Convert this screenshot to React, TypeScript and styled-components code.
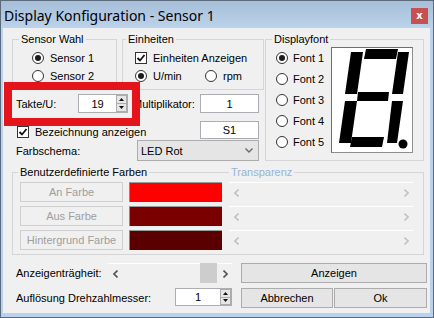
import React from "react";
import styled, { createGlobalStyle } from "styled-components";

const GlobalStyle = createGlobalStyle`
  html, body { margin: 0; padding: 0; background: #ffffff; }
  body {
    font-family: "Liberation Sans", Arial, sans-serif;
    font-size: 11px;
    color: #000;
  }
`;

const Window = styled.div`
  width: 434px;
  height: 318px;
  box-sizing: border-box;
  border: 1px solid #5c6b7c;
  background: linear-gradient(#a7bed8, #bcd3ec 28px, #b9d1eb);
  display: flex;
  flex-direction: column;
`;

const TitleBar = styled.div`
  height: 27px;
  flex: none;
  display: flex;
  align-items: center;
  justify-content: space-between;
  padding: 0 5px 0 3px;
`;

const TitleText = styled.span`
  font-family: "Noto Sans", "Open Sans", sans-serif;
  font-size: 14px;
  color: #000;
  margin-top: 1px;
`;

const CloseBox = styled.div`
  width: 17px;
  height: 16px;
  background: #c75050;
  color: #fff;
  font-family: "DejaVu Sans", sans-serif;
  font-weight: bold;
  font-size: 10px;
  display: flex;
  align-items: center;
  justify-content: center;
  margin-top: 2px;
`;

const Client = styled.div`
  flex: 1;
  margin: 0 3px 4px 2px;
  background: #f0f0f0;
  position: relative;
  box-sizing: border-box;
  padding: 11px 0 0 9px;
  display: flex;
  flex-direction: column;
`;

const TopSection = styled.div`
  display: flex;
  gap: 1px;
  align-items: flex-start;
`;

const LeftCol = styled.div`
  width: 252px;
  display: flex;
  flex-direction: column;
`;

const GroupRow = styled.div`
  display: flex;
  gap: 5px;
`;

const Group = styled.div<{ $w: number; $h: number; $pad?: string }>`
  position: relative;
  box-sizing: border-box;
  width: ${(p) => p.$w}px;
  height: ${(p) => p.$h}px;
  border: 1px solid #d5d5d5;
  padding: ${(p) => p.$pad || "0"};
`;

const Legend = styled.span<{ $x?: number; $blue?: boolean }>`
  position: absolute;
  top: -7px;
  left: ${(p) => p.$x ?? 5}px;
  padding: 0 2px;
  line-height: 13px;
  background: #f0f0f0;
  color: ${(p) => (p.$blue ? "#97b4d6" : "#000")};
  white-space: nowrap;
`;

const OptionRow = styled.div<{ $h?: number }>`
  display: flex;
  align-items: center;
  height: ${(p) => p.$h ?? 18}px;
`;

const Option = styled.label<{ $w?: number; $gap?: number; $shift?: number }>`
  display: flex;
  align-items: center;
  gap: ${(p) => p.$gap ?? 6}px;
  width: ${(p) => (p.$w ? `${p.$w}px` : "auto")};
  margin-top: ${(p) => p.$shift ?? 0}px;
  white-space: nowrap;
`;

const RadioDot = styled.span<{ $on?: boolean }>`
  width: 12px;
  height: 12px;
  box-sizing: border-box;
  border-radius: 50%;
  border: 1px solid #333;
  background: #fff;
  flex: none;
  display: flex;
  align-items: center;
  justify-content: center;
  &::after {
    content: "";
    width: 6px;
    height: 6px;
    border-radius: 50%;
    background: ${(p) => (p.$on ? "#1b1b1b" : "transparent")};
  }
`;

const CheckBox = styled.span`
  width: 12px;
  height: 12px;
  box-sizing: border-box;
  border: 1px solid #333;
  background: #fff;
  flex: none;
  display: flex;
  align-items: center;
  justify-content: center;
`;

const FormRow = styled.div<{ $h: number; $top: number }>`
  display: flex;
  align-items: center;
  height: ${(p) => p.$h}px;
  margin-top: ${(p) => p.$top}px;
  width: 247px;
  padding-left: 4px;
  box-sizing: border-box;
`;

const Label = styled.span<{ $w?: number; $ml?: number }>`
  width: ${(p) => (p.$w ? `${p.$w}px` : "auto")};
  margin-left: ${(p) => p.$ml ?? 0}px;
  white-space: nowrap;
  flex: none;
`;

const TextField = styled.div<{ $w: number; $h?: number }>`
  width: ${(p) => p.$w}px;
  height: ${(p) => p.$h ?? 19}px;
  box-sizing: border-box;
  border: 1px solid #abadb3;
  background: #fff;
  display: flex;
  align-items: center;
  justify-content: center;
  margin-left: auto;
  flex: none;
`;

const Spin = styled.div<{ $w: number; $h?: number }>`
  width: ${(p) => p.$w}px;
  height: ${(p) => p.$h ?? 19}px;
  box-sizing: border-box;
  border: 1px solid #abadb3;
  background: #fff;
  display: flex;
  flex: none;
`;

const SpinValue = styled.span`
  flex: 1;
  display: flex;
  align-items: center;
  justify-content: center;
`;

const SpinButtons = styled.div`
  width: 11px;
  display: flex;
  flex-direction: column;
`;

const SpinBtn = styled.div`
  flex: 1;
  background: #e6e6e6;
  border: 1px solid #acacac;
  margin-top: -1px;
  display: flex;
  align-items: center;
  justify-content: center;
  &:first-child {
    margin-top: 0;
  }
`;

const Combo = styled.div`
  width: 122px;
  height: 21px;
  box-sizing: border-box;
  border: 1px solid #acacac;
  background: #e5e5e5;
  margin-left: auto;
  display: flex;
  align-items: center;
  justify-content: space-between;
  padding: 0 5px 0 3px;
  color: #000;
`;

const FontPane = styled.div`
  display: flex;
  padding: 7px 0 0 10px;
`;

const FontList = styled.div`
  width: 55px;
  display: flex;
  flex-direction: column;
`;

const Preview = styled.div`
  width: 82px;
  height: 106px;
  box-sizing: border-box;
  background: #fff;
  border: 1px solid #8e8e8e;
  border-top-color: #6f6f6f;
  border-left-color: #6f6f6f;
`;

const ColorGroupBody = styled.div`
  display: flex;
  flex-direction: column;
  gap: 4px;
  padding: 9px 0 0 7px;
`;

const ColorRow = styled.div`
  display: flex;
  align-items: stretch;
  height: 20px;
`;

const Button = styled.div<{ $w: number; $off?: boolean; $ml?: number }>`
  width: ${(p) => p.$w}px;
  margin-left: ${(p) => p.$ml ?? 0}px;
  height: 20px;
  box-sizing: border-box;
  flex: none;
  border: 1px solid ${(p) => (p.$off ? "#cfcfcf" : "#acacac")};
  background: ${(p) => (p.$off ? "#f0f0f0" : "#e5e5e5")};
  color: ${(p) => (p.$off ? "#9e9e9e" : "#000")};
  display: flex;
  align-items: center;
  justify-content: center;
`;

const Swatch = styled.div<{ $color: string }>`
  width: 93px;
  margin-left: 6px;
  box-sizing: border-box;
  background: ${(p) => p.$color};
  border-left: 1px solid #8a8a8a;
  border-top: 1px solid #9a9a9a;
`;

const ScrollBar = styled.div<{ $w: number; $ml?: number }>`
  width: ${(p) => p.$w}px;
  margin-left: ${(p) => p.$ml ?? 0}px;
  height: 20px;
  box-sizing: border-box;
  border-top: 1px solid #ffffff;
  background: #f0f0f0;
  display: flex;
  align-items: center;
  justify-content: space-between;
  padding: 0 4px 0 5px;
  flex: none;
`;

const Thumb = styled.div`
  width: 17px;
  align-self: stretch;
  margin: -1px 6px 0 auto;
  background: #cdcdcd;
`;

const BottomRow = styled.div<{ $top: number }>`
  display: flex;
  align-items: center;
  height: 20px;
  margin-top: ${(p) => p.$top}px;
`;

const BottomLabel = styled.span<{ $w: number }>`
  width: ${(p) => p.$w}px;
  padding-left: 4px;
  box-sizing: border-box;
  flex: none;
  white-space: nowrap;
`;

const SpinSlot = styled.div`
  align-self: flex-start;
`;

const Marker = styled.div`
  position: absolute;
  left: 1px;
  top: 54px;
  width: 136px;
  height: 44px;
  box-sizing: border-box;
  border: 8px solid #e5141c;
  pointer-events: none;
`;

const Chevron = ({ dir, color }: { dir: "l" | "r" | "d"; color: string }) => {
  if (dir === "d") {
    return (
      <svg width="8" height="5" viewBox="0 0 8 5">
        <polyline points="0.5,0.5 4,4 7.5,0.5" fill="none" stroke={color} strokeWidth="1.4" />
      </svg>
    );
  }
  const pts = dir === "l" ? "4.5,0.5 1,4 4.5,7.5" : "0.5,0.5 4,4 0.5,7.5";
  return (
    <svg width="5" height="8" viewBox="0 0 5 8">
      <polyline points={pts} fill="none" stroke={color} strokeWidth="1.6" />
    </svg>
  );
};

const Tri = ({ up }: { up?: boolean }) => (
  <svg width="5" height="3" viewBox="0 0 5 3">
    <polygon points={up ? "0,3 2.5,0 5,3" : "0,0 5,0 2.5,3"} fill="#111" />
  </svg>
);

const Check = () => (
  <svg width="10" height="10" viewBox="0 0 10 10">
    <polyline points="1.5,5 4,7.5 8.5,2" fill="none" stroke="#111" strokeWidth="1.8" />
  </svg>
);

const SpinBox = ({ value, w, h }: { value: string; w: number; h?: number }) => (
  <Spin $w={w} $h={h}>
    <SpinValue>{value}</SpinValue>
    <SpinButtons>
      <SpinBtn>
        <Tri up />
      </SpinBtn>
      <SpinBtn>
        <Tri />
      </SpinBtn>
    </SpinButtons>
  </Spin>
);

// 7-segment "8." preview, drawn to the pixel positions of the original box
const SevenSegment = () => (
  <svg width="80" height="104" viewBox="0 0 80 104">
    <g fill="#000">
      <polygon points="34,1 66,1 64,11 32,11" />
      <polygon points="19,4 31,4 25,46 13,46" />
      <polygon points="66,4 77,4 71,46 60,46" />
      <polygon points="26,44 57,44 56,53 25,53" />
      <polygon points="13,53 25,53 19,95 7,95" />
      <polygon points="60,53 71,53 65,95 55,95" />
      <polygon points="20,89 52,89 50,99 18,99" />
      <circle cx="71" cy="96" r="4.5" />
    </g>
  </svg>
);

const colorRows = [
  { label: "An Farbe", color: "#ff0000" },
  { label: "Aus Farbe", color: "#7a0000" },
  { label: "Hintergrund Farbe", color: "#5a0000" },
];

const fonts = ["Font 1", "Font 2", "Font 3", "Font 4", "Font 5"];

export default function App() {
  return (
    <>
      <GlobalStyle />
      <Window>
        <TitleBar>
          <TitleText>Display Konfiguration - Sensor 1</TitleText>
          <CloseBox>x</CloseBox>
        </TitleBar>
        <Client>
          <TopSection>
            <LeftCol>
              <GroupRow>
                <Group $w={105} $h={51} $pad="9px 0 0 19px">
                  <Legend $x={6}>Sensor Wahl</Legend>
                  <OptionRow>
                    <Option>
                      <RadioDot $on />
                      Sensor 1
                    </Option>
                  </OptionRow>
                  <OptionRow>
                    <Option>
                      <RadioDot />
                      Sensor 2
                    </Option>
                  </OptionRow>
                </Group>
                <Group $w={142} $h={51} $pad="9px 0 0 12px">
                  <Legend $x={3}>Einheiten</Legend>
                  <OptionRow>
                    <Option>
                      <CheckBox>
                        <Check />
                      </CheckBox>
                      Einheiten Anzeigen
                    </Option>
                  </OptionRow>
                  <OptionRow>
                    <Option $w={70}>
                      <RadioDot $on />
                      U/min
                    </Option>
                    <Option>
                      <RadioDot />
                      rpm
                    </Option>
                  </OptionRow>
                </Group>
              </GroupRow>

              <FormRow $h={19} $top={4}>
                <Label $w={62}>Takte/U:</Label>
                <SpinBox value="19" w={50} />
                <Label $ml={5}>Multiplikator:</Label>
                <TextField $w={59}>1</TextField>
              </FormRow>

              <FormRow $h={18} $top={8}>
                <Option $shift={4} style={{ marginLeft: 1 }}>
                  <CheckBox>
                    <Check />
                  </CheckBox>
                  Bezeichnung anzeigen
                </Option>
                <TextField $w={59} $h={18}>S1</TextField>
              </FormRow>

              <FormRow $h={21} $top={1}>
                <Label>Farbschema:</Label>
                <Combo>
                  LED Rot
                  <Chevron dir="d" color="#6a6a6a" />
                </Combo>
              </FormRow>
            </LeftCol>

            <Group $w={159} $h={122}>
              <Legend $x={6}>Displayfont</Legend>
              <FontPane>
                <FontList>
                  {fonts.map((f, i) => (
                    <OptionRow key={f} $h={21}>
                      <Option $gap={5}>
                        <RadioDot $on={i === 0} />
                        {f}
                      </Option>
                    </OptionRow>
                  ))}
                </FontList>
                <Preview>
                  <SevenSegment />
                </Preview>
              </FontPane>
            </Group>
          </TopSection>

          <Group $w={412} $h={83} style={{ marginTop: 11 }}>
            <Legend>Benutzerdefinierte Farben</Legend>
            <Legend $x={216} $blue>
              Transparenz
            </Legend>
            <ColorGroupBody>
              {colorRows.map((r) => (
                <ColorRow key={r.label}>
                  <Button $w={103} $off>
                    {r.label}
                  </Button>
                  <Swatch $color={r.color} />
                  <ScrollBar $w={184} $ml={7}>
                    <Chevron dir="l" color="#c2c2c2" />
                    <Chevron dir="r" color="#c2c2c2" />
                  </ScrollBar>
                </ColorRow>
              ))}
            </ColorGroupBody>
          </Group>

          <BottomRow $top={8}>
            <BottomLabel $w={96}>Anzeigenträgheit:</BottomLabel>
            <ScrollBar $w={124}>
              <Chevron dir="l" color="#555" />
              <Thumb />
              <Chevron dir="r" color="#555" />
            </ScrollBar>
            <Button $w={186} $ml={9}>
              Anzeigen
            </Button>
          </BottomRow>

          <BottomRow $top={5}>
            <BottomLabel $w={163}>Auflösung Drehzahlmesser:</BottomLabel>
            <SpinSlot>
              <SpinBox value="1" w={57} h={18} />
            </SpinSlot>
            <Button $w={92} $ml={9}>
              Abbrechen
            </Button>
            <Button $w={93} $ml={1}>
              Ok
            </Button>
          </BottomRow>

          <Marker />
        </Client>
      </Window>
    </>
  );
}
